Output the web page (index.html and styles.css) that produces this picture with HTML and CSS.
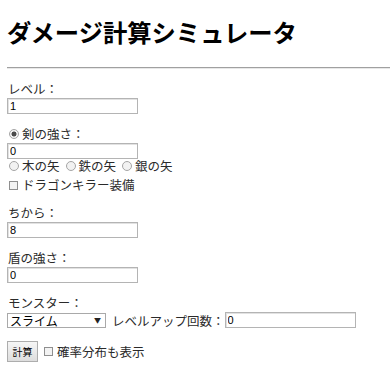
FILE: index.html
```html
<!DOCTYPE html>
<html lang="ja">
<head>
<meta charset="utf-8">
<title>ダメージ計算シミュレータ</title>
<link rel="stylesheet" href="styles.css">
</head>
<body>
<h1 class="title">ダメージ計算シミュレータ</h1>
<hr class="rule">
<form class="sim">
  <div class="field">
    <div class="lbl">レベル：</div>
    <input class="num" type="text" value="1">
  </div>
  <div class="field">
    <label class="lbl"><input class="radio" type="radio" name="w" checked>剣の強さ：</label>
    <input class="num" type="text" value="0">
    <div class="opts first">
      <label class="opt"><input class="radio" type="radio" name="w">木の矢</label>
      <label class="opt"><input class="radio" type="radio" name="w">鉄の矢</label>
      <label class="opt"><input class="radio" type="radio" name="w">銀の矢</label>
    </div>
    <div class="opts">
      <label class="opt"><input class="check" type="checkbox">ドラゴンキラー装備</label>
    </div>
  </div>
  <div class="field">
    <div class="lbl">ちから：</div>
    <input class="num" type="text" value="8">
  </div>
  <div class="field">
    <div class="lbl">盾の強さ：</div>
    <input class="num" type="text" value="0">
  </div>
  <div class="field">
    <div class="lbl">モンスター：</div>
    <div class="inline">
      <div class="select"><span class="sel-text">スライム</span><span class="sel-arrow">▼</span></div>
      <span class="txt">レベルアップ回数：</span>
      <input class="num" type="text" value="0">
    </div>
  </div>
  <div class="actions">
    <button class="btn" type="button">計算</button>
    <label class="opt"><input class="check" type="checkbox">確率分布も表示</label>
  </div>
</form>
</body>
</html>
```
FILE: styles.css
```css
html, body {
  background: #ffffff;
}
body {
  margin: 0;
  padding: 14px 0 0 8px;
  font-family: "Noto Sans CJK JP", "Noto Sans", sans-serif;
  font-size: 12.5px;
  color: #2a2a2a;
  overflow: hidden;
}
.title {
  margin: 0 0 0 -1px;
  font-size: 24.3px;
  line-height: 36px;
  font-weight: bold;
  color: #000;
}
.rule {
  margin: 17px 0 0 -1px;
  border: 0;
  border-top: 1px solid #a0a0a0;
  border-bottom: 1px solid #e8e8e8;
  height: 0;
}
.sim {
  display: flex;
  flex-direction: column;
}
.field {
  margin-top: 12px;
  display: flex;
  flex-direction: column;
  align-items: flex-start;
}
.lbl {
  display: flex;
  align-items: center;
  line-height: 16px;
  height: 16px;
}
.num {
  box-sizing: border-box;
  width: 131px;
  height: 16px;
  margin: 1px 0 0 -1px;
  padding: 0 2px;
  border: 1px solid #b4b4b4;
  box-shadow: inset 1px 1px 0 #e2e2e2;
  font-family: "Liberation Sans", sans-serif;
  font-size: 11px;
  color: #000;
  background: #fff;
  outline: none;
}
.opts {
  display: flex;
  gap: 5px;
  line-height: 16px;
  height: 16px;
  margin-top: 3px;
}
.opts.first {
  margin-top: -1px;
}
.opt {
  display: flex;
  align-items: center;
}
.radio {
  appearance: none;
  -webkit-appearance: none;
  box-sizing: border-box;
  width: 10px;
  height: 10px;
  margin: 0 3px 0 1px;
  border: 1px solid #a5a5a5;
  border-radius: 50%;
  background: #f2f2f2;
}
.radio:checked {
  background: radial-gradient(circle, #4a4a4a 0 2.2px, #f2f2f2 2.8px);
}
.check {
  appearance: none;
  -webkit-appearance: none;
  box-sizing: border-box;
  width: 9px;
  height: 9px;
  margin: 0 4px 0 1px;
  border: 1px solid #8f8f8f;
  background: #f3f3f3;
}
.inline {
  display: flex;
  align-items: center;
  margin-top: 1px;
  height: 16px;
}
.inline .num {
  margin: 0;
}
.select {
  box-sizing: border-box;
  width: 99px;
  height: 15px;
  margin-left: -1px;
  border: 1px solid #a9a9a9;
  display: flex;
  align-items: center;
  justify-content: space-between;
  padding: 0 4px 0 2px;
  background: #fff;
  font-size: 12px;
  line-height: 13px;
  color: #000;
}
.sel-arrow {
  font-size: 7px;
  color: #222;
}
.txt {
  margin-left: 6px;
}
.actions {
  margin-top: 13px;
  display: flex;
  align-items: center;
  gap: 5px;
}
.btn {
  box-sizing: border-box;
  width: 31px;
  height: 21px;
  margin-left: -1px;
  padding: 0;
  border: 1px solid #adadad;
  border-radius: 0;
  background: linear-gradient(#f6f6f6, #dddddd);
  font-family: "Noto Sans CJK JP", sans-serif;
  font-size: 10px;
  color: #000;
}
```
